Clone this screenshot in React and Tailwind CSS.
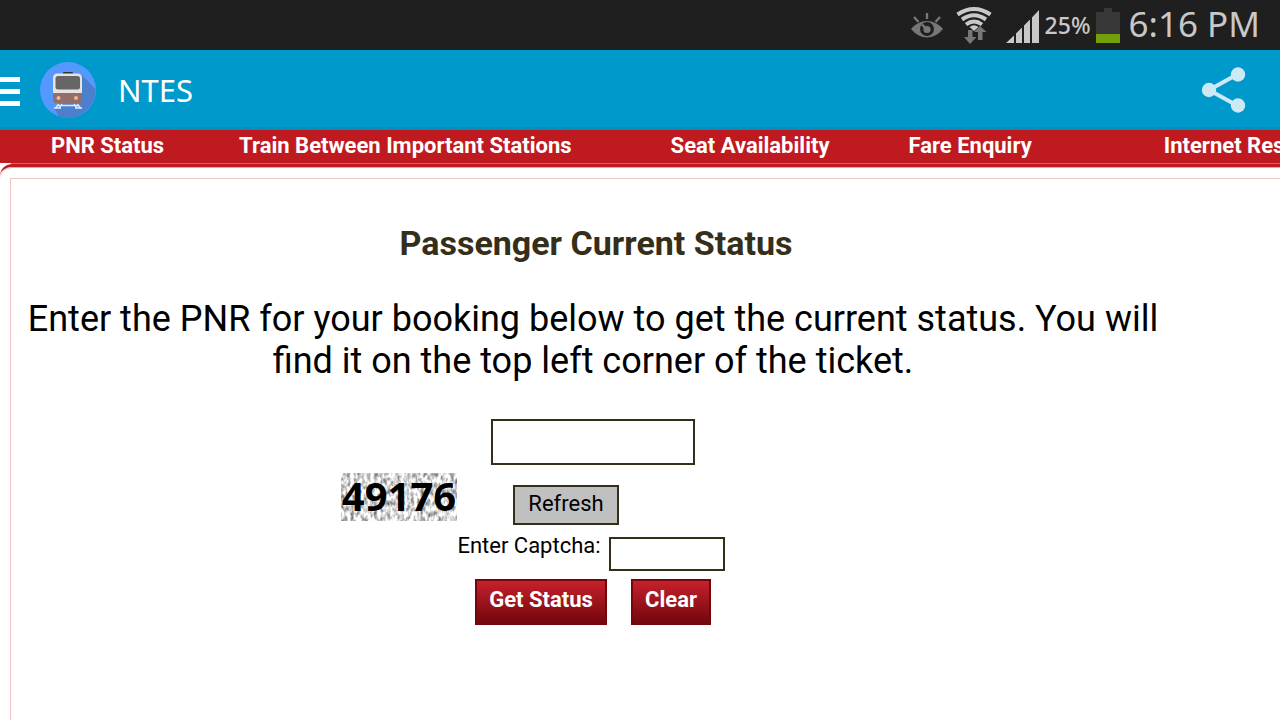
import React, { useState } from 'react';

const navLinks = [
  { label: 'PNR Status', className: 'ml-[51px]' },
  { label: 'Train Between Important Stations', className: 'ml-[75px]' },
  { label: 'Seat Availability', className: 'ml-[99px]' },
  { label: 'Fare Enquiry', className: 'ml-[79px]' },
  { label: 'Internet Reservation', className: 'ml-[132px]' },
];

const EyeIcon = () => (
  <svg width="34" height="28" viewBox="0 0 34 28" fill="none" className="text-[#777777]">
    <path d="M17 1v6M4 5l4.500 5M30 5l-4.500 5" stroke="currentColor" strokeWidth="2.400" />
    <path d="M1 17Q8 9 17 9T33 17Q26 25.500 17 25.500T1 17Z" fill="currentColor" />
    <circle cx="17" cy="17" r="7" fill="#1f1f1f" />
    <circle cx="17" cy="17.500" r="3.600" fill="currentColor" />
    <path d="M12 12.500l5 5" stroke="currentColor" strokeWidth="2.400" />
  </svg>
);

const WifiIcon = () => (
  <svg width="36" height="38" viewBox="0 0 36 38" fill="none">
    <g stroke="#c8c8c8" strokeWidth="4">
      <path d="M1.500 8.500Q18 -2.500 34.500 8.500" />
      <path d="M6 13.500Q18 5 30 13.500" />
      <path d="M10 18.500Q18 12.500 26 18.500" />
    </g>
    <path d="M13.500 21Q18 17.500 22.500 21L18 25Z" fill="#c8c8c8" />
    <path d="M12 24h4.500v7h4L14 38l-6-7h4z" fill="#777777" />
    <path d="M22 34h4.500v-8h4L24 20 18 26h4z" fill="#777777" />
  </svg>
);

const SignalIcon = () => (
  <svg width="33" height="33" viewBox="0 0 33 33" fill="#c8c8c8">
    <path d="M0 33L8 25.500V33zM10 23.500L16 17.500V33H10zM18 15.500L24 9.500V33H18zM26 7.500L33 0V33H26z" />
  </svg>
);

const BatteryIcon = () => (
  <svg width="24" height="35" viewBox="0 0 24 35">
    <path d="M8 0h8v4h8v31H0V4h8z" fill="#383838" />
    <path d="M0 26h24v9H0z" fill="#73a00a" />
  </svg>
);

const MenuIcon = () => (
  <svg width="20" height="29" viewBox="0 0 20 29" fill="#ffffff">
    <path d="M0 0h20v5H0zM0 12h20v5H0zM0 24h20v5H0z" />
  </svg>
);

const TrainIcon = () => (
  <svg width="56" height="56" viewBox="0 0 56 56">
    <circle cx="28" cy="28" r="28" fill="#5599ff" />
    <path d="M42 13L55.500 27A28 28 0 0 1 19 54.500L14 46z" fill="#4d80cc" />
    <rect x="23" y="10" width="10" height="3" rx="1" fill="#333333" />
    <path d="M13 16q0-4.500 4.500-4.500h20q4.500 0 4.500 4.500v16H13z" fill="#e6e3e2" />
    <rect x="15.500" y="14" width="24.500" height="13.500" rx="2.500" fill="#666666" />
    <path d="M13 31h29v7q0 3.500-4 3.500H17q-4 0-4-3.500z" fill="#916f6f" />
    <circle cx="18.500" cy="36" r="2" fill="#ffb380" />
    <circle cx="36" cy="36" r="2" fill="#ffb380" />
    <g stroke="#e3ecf7" strokeWidth="1.300" fill="none">
      <path d="M18.500 42l-3 4M22 42l-3 4M34 42l3 4M37.500 42l3 4M17 43.500h22M14 46h7M35 46h7" />
    </g>
  </svg>
);

const ShareIcon = () => (
  <svg width="46" height="46" viewBox="0 0 46 46" fill="#cceaf5">
    <path d="M37 7L8 23l29 16" stroke="#cceaf5" strokeWidth="4" fill="none" />
    <circle cx="8" cy="23" r="7.200" />
    <circle cx="37" cy="7.500" r="7.200" />
    <circle cx="37" cy="38.500" r="7.200" />
  </svg>
);

const StatusBar = () => (
  <div className="flex h-[50px] items-center justify-end bg-[#1f1f1f] pr-5 font-['Noto_Sans',sans-serif] text-[#c8c8c8]">
    <div className="pt-px"><EyeIcon /></div>
    <div className="ml-3"><WifiIcon /></div>
    <div className="ml-[14px] pt-[3px]"><SignalIcon /></div>
    <span className="ml-[6px] text-[23px] leading-none font-medium">25%</span>
    <div className="ml-[5px]"><BatteryIcon /></div>
    <span className="ml-[9px] pb-1 text-[35px] leading-none">6:16 PM</span>
  </div>
);

const AppHeader = () => (
  <header className="flex h-20 items-center bg-[#0099cc] pr-[33px] shadow-[inset_0_-3px_0_#0090c0]">
    <button type="button" aria-label="Open menu" className="pt-[2px]">
      <MenuIcon />
    </button>
    <div className="ml-5"><TrainIcon /></div>
    <h1 className="ml-[22px] font-['Noto_Sans',sans-serif] text-[31px] text-white">NTES</h1>
    <button type="button" aria-label="Share" className="ml-auto">
      <ShareIcon />
    </button>
  </header>
);

const CaptchaImage = ({ code }) => (
  <svg width="116" height="48" viewBox="0 0 116 48" className="overflow-visible">
    <filter id="noise" x="0" y="0" width="100%" height="100%" colorInterpolationFilters="sRGB">
      <feTurbulence type="fractalNoise" baseFrequency="0.3 0.18" numOctaves="2" seed="4" />
      <feColorMatrix values="1.200 0 0 0 0.250  1.200 0 0 0 0.250  1.200 0 0 0 0.250  0 0 0 0 1" />
    </filter>
    <rect width="116" height="48" filter="url(#noise)" />
    <text x="58" y="38" textAnchor="middle" className="fill-black font-['Noto_Sans',sans-serif] text-[40px] font-bold">
      {code}
    </text>
  </svg>
);

const PnrForm = () => {
  const [pnr, setPnr] = useState('');
  const [captcha, setCaptcha] = useState('');

  const handleClear = () => {
    setPnr('');
    setCaptcha('');
  };

  return (
    <form onSubmit={(e) => e.preventDefault()} className="mt-[37px] flex flex-col items-center text-[22px] leading-[26px]">
      <input
        type="text"
        aria-label="PNR number"
        value={pnr}
        onChange={(e) => setPnr(e.target.value)}
        className="h-[46px] w-[204px] border-2 border-[#352e18] bg-white px-2 outline-none"
      />

      {/* Captcha */}
      <div className="mt-2 flex w-[504px] items-start">
        <CaptchaImage code="49176" />
        <button type="button" className="mt-3 ml-14 h-10 w-[106px] border-2 border-[#352e18] bg-[#c0c0c0] pb-[2px]">
          Refresh
        </button>
      </div>
      <div className="mt-3 mr-1 flex items-start">
        <label htmlFor="captcha" className="-mt-1">Enter Captcha:</label>
        <input
          id="captcha"
          type="text"
          value={captcha}
          onChange={(e) => setCaptcha(e.target.value)}
          className="ml-2 h-[34px] w-[116px] border-2 border-[#352e18] bg-white px-2 outline-none"
        />
      </div>

      {/* Actions */}
      <div className="mt-2 flex gap-6 font-bold text-white">
        <button type="submit" className="h-[46px] w-[132px] border-2 border-[#75060e] bg-linear-to-b from-[#c6212b] to-[#75060e] pb-1">
          Get Status
        </button>
        <button type="button" onClick={handleClear} className="h-[46px] w-20 border-2 border-[#75060e] bg-linear-to-b from-[#c6212b] to-[#75060e] pb-1">
          Clear
        </button>
      </div>
    </form>
  );
};

const App = () => {
  return (
    <div className="flex h-screen flex-col overflow-hidden bg-white font-[Roboto,sans-serif] text-black">
      <StatusBar />
      <AppHeader />

      <nav className="flex h-[33px] shrink-0 overflow-hidden bg-[#c01a21] text-[22px] leading-8 font-bold whitespace-nowrap text-white">
        {navLinks.map(({ label, className }) => (
          <a key={label} href="#" className={`shrink-0 ${className}`}>{label}</a>
        ))}
      </nav>
      <div className="ml-[11px] h-px shrink-0 bg-[#d9626a]" />

      {/* Page body */}
      <div className="flex flex-1 flex-col rounded-tl-xl border-t-[3px] border-[#c01a21]">
        <main className="flex flex-1 flex-col rounded-tl-xl border-t border-[#e9a5a8] bg-white pt-[10px] pl-[10px]">
          <section className="flex-1 border-t border-l border-[#f0c4c6] pt-[43px] pr-[105px] text-center">
            <h2 className="pl-[6px] text-[34px] leading-[42px] font-bold text-[#352e18]">Passenger Current Status</h2>
            <p className="mt-[34px] text-[36px] leading-[42px]">
              Enter the PNR for your booking below to get the current status. You will find it on the top left corner of the ticket.
            </p>
            <PnrForm />
          </section>
        </main>
      </div>
    </div>
  );
};

export default App;
